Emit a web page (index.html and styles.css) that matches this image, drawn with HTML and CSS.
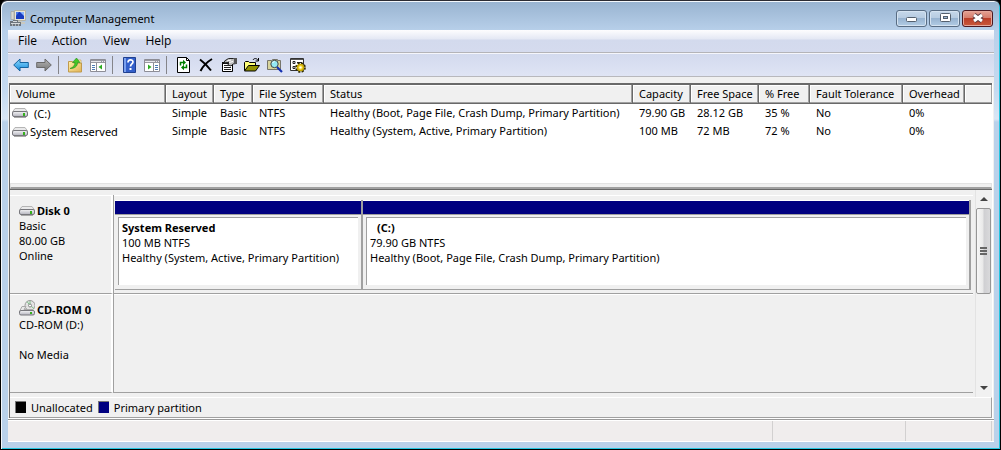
FILE: index.html
```html
<!DOCTYPE html>
<html lang="en">
<head>
<meta charset="utf-8">
<title>Computer Management</title>
<link rel="stylesheet" href="styles.css">
</head>
<body>
<svg class="defs" width="0" height="0" aria-hidden="true">
  <defs>
    <linearGradient id="metal" x1="0" y1="0" x2="0" y2="1"><stop offset="0" stop-color="#f4f4f6"/><stop offset="1" stop-color="#b4b4be"/></linearGradient>
    <linearGradient id="blue" x1="0" y1="0" x2="0" y2="1"><stop offset="0" stop-color="#8fdcff"/><stop offset="1" stop-color="#1388da"/></linearGradient>
    <linearGradient id="gray" x1="0" y1="0" x2="0" y2="1"><stop offset="0" stop-color="#b4b4b4"/><stop offset="1" stop-color="#777"/></linearGradient>
    <linearGradient id="folder" x1="0" y1="0" x2="1" y2="1"><stop offset="0" stop-color="#fff0a8"/><stop offset="1" stop-color="#e2b355"/></linearGradient>
    <symbol id="drive" viewBox="0 0 16 10">
      <path d="M3 .5h10l2.500 3.500H.5z" fill="#e9e9ea" stroke="#b5b5b5"/>
      <rect x=".5" y="3.500" width="15" height="5" rx="1.500" fill="url(#metal)" stroke="#77777c"/>
      <path d="M2 9.500h12" stroke="#a8a8a8"/>
      <rect x="11" y="5" width="2" height="3" fill="#35b01c"/>
    </symbol>
  </defs>
</svg>
<div class="window">
  <header class="titlebar">
    <svg class="icon" viewBox="0 0 16 16" aria-hidden="true">
      <path d="M4.500.5h11v10h-11z" fill="#e8e6d8" stroke="#b5b3a4"/><path d="M6 2h8v7H6z" fill="#183cc0"/><path d="M10 2h4v4z" fill="#8bb6ff"/><path d="M6 2h3L6 6z" fill="#4b79e6"/>
      <path d="M8 11h4v1h3v2H9z" fill="#c9c9c0"/><path d="M1 1.500h3v8H1z" fill="#d8d8d2" stroke="#9a9a94" stroke-width=".6"/><path d="M0 11h3v-1h5v2h3v4H0z" fill="#6d757d"/><path d="M3 11.500h4M1 13.500h9" stroke="#d5dade"/><path d="M2 15h1M5 15h1M8 15h1" stroke="#eee"/>
    </svg>
    <h1>Computer Management</h1>
    <div class="controls">
      <button class="control" aria-label="Minimize"><svg viewBox="0 0 16 12"><rect x="2.500" y="5.500" width="10" height="4" rx="1" fill="#fff" stroke="#54606e"/></svg></button>
      <button class="control" aria-label="Maximize"><svg viewBox="0 0 16 12"><rect x="3.500" y="1.500" width="10" height="8" rx="1" fill="#fff" stroke="#54606e"/><rect x="6.500" y="4.500" width="4" height="2" fill="#9db8d6" stroke="#54606e"/></svg></button>
      <button class="control close" aria-label="Close"><svg viewBox="0 0 16 12"><path d="M4 3l8 6M12 3l-8 6" stroke="#5c3b40" stroke-width="5"/><path d="M4 3l8 6M12 3l-8 6" stroke="#fff" stroke-width="3"/></svg></button>
    </div>
  </header>
  <div class="client">
    <nav class="menubar"><button>File</button><button>Action</button><button>View</button><button>Help</button></nav>
    <div class="toolbar" role="toolbar">
      <button aria-label="Back"><svg class="icon" viewBox="0 0 16 16"><path d="M.7 8L7 2v3.500h8.300v5H7V14z" fill="url(#blue)" stroke="#17649f"/></svg></button>
      <button aria-label="Forward"><svg class="icon" viewBox="0 0 16 16"><path d="M15.300 8L9 2v3.500H.7v5H9V14z" fill="url(#gray)" stroke="#6a6a6a"/></svg></button>
      <span class="sep"></span>
      <button aria-label="Up one level"><svg class="icon" viewBox="0 0 16 16"><path d="M1.500 4.500h4l1 1.500h8v9h-13z" fill="url(#folder)" stroke="#c09a4c"/><path d="M9 3h5v3h-4z" fill="#fff4bd" stroke="#c09a4c" stroke-width=".6"/><path d="M3 11.500c3-1 5-3 5-6H5.500L9.500 1 13 5.500h-2.500c0 4-3 6-7.500 6z" fill="#46c827" stroke="#228c18" stroke-width=".6"/></svg></button>
      <button aria-label="Show console tree"><svg class="icon" viewBox="0 0 16 16"><path d="M.5 2.500h15v12H.5z" fill="#fff" stroke="#8d8d96"/><path d="M1 3h14v3H1z" fill="#9999a2"/><path d="M1 4.500h10M12 4.500h1M14 4.500h1" stroke="#e7e7ec"/><path d="M6.500 6v8" stroke="#8d8d96"/><path d="M2 8.500h3M2 10.500h3M2 12.500h3" stroke="#4c7bb5"/><path d="M12 7.500v5L8.500 10z" fill="#2dac22"/></svg></button>
      <span class="sep"></span>
      <button aria-label="Help"><svg class="icon" viewBox="0 0 16 16"><path d="M2.500.5h12v15h-12z" fill="#335fca" stroke="#20408f"/><path d="M3 1h2v14H3z" fill="#7aa0ee"/><path d="M7 5.500c0-3.500 5-3.500 5-.5 0 2-2.500 2-2.500 4.500" fill="none" stroke="#fff" stroke-width="1.700"/><path d="M8.500 11h2v2h-2z" fill="#fff"/></svg></button>
      <button aria-label="Show action pane"><svg class="icon" viewBox="0 0 16 16"><path d="M.5 2.500h15v12H.5z" fill="#fff" stroke="#8d8d96"/><path d="M1 3h14v3H1z" fill="#9999a2"/><path d="M1 4.500h10M12 4.500h1M14 4.500h1" stroke="#e7e7ec"/><path d="M9.500 6v8" stroke="#8d8d96"/><path d="M11 8.500h3M11 10.500h3M11 12.500h3" stroke="#4c7bb5"/><path d="M4 7.500v5L7.500 10z" fill="#2dac22"/></svg></button>
      <span class="sep"></span>
      <button aria-label="Refresh"><svg class="icon" viewBox="0 0 16 16"><path d="M2.500.5h9l3 3v12h-12z" fill="#fff" stroke="#000"/><path d="M11.500.5v3h3" fill="none" stroke="#000"/><path d="M5.500 8.500v-3h3M11.500 7.500v3h-3" fill="none" stroke="#008000" stroke-width="1.500"/><path d="M8 2.700v5.600l3-2.800zM9 7.700v5.600l-3-2.800z" fill="#008000"/></svg></button>
      <button aria-label="Delete"><svg class="icon" viewBox="0 0 16 16"><path d="M2 2.500c4 3 8 7 11 11M14 2C9 5 5 9 2.500 14" fill="none" stroke="#000" stroke-width="2"/></svg></button>
      <button aria-label="Properties"><svg class="icon" viewBox="0 0 16 16"><path d="M1.500 5.500h10v9h-10z" fill="#fff" stroke="#000"/><path d="M1 5h8v2H1z" fill="#111"/><path d="M3 8.500h7M3 10.500h7M3 12.500h7" stroke="#222"/><path d="M3.500 4l4-2.500h5l2.500 1v4l-3 .5-2 2-3-1 1-3-4 1z" fill="#bbb" stroke="#222"/><path d="M6 4l4-1M8 5.500l4-1" stroke="#fff"/><path d="M13 1h3v6h-3z" fill="#555"/></svg></button>
      <button aria-label="Open"><svg class="icon" viewBox="0 0 16 16"><path d="M.5 13.500v-8l1-1h3l1 1h6v3" fill="#ffff78" stroke="#000"/><path d="M.5 14l4-5.500h11L11.500 14z" fill="#949400" stroke="#000"/><path d="M9 3c1-2 4-2 5 .5M14.500 1v3h-3" fill="none" stroke="#000"/></svg></button>
      <button aria-label="Search"><svg class="icon" viewBox="0 0 16 16"><path d="M.5 3.500h4l1-1h5v1h3v9H.5z" fill="#d8d49c" stroke="#77756a"/><circle cx="7.500" cy="7" r="3.700" fill="#93e8f4" stroke="#444"/><path d="M5.500 6l2-2" stroke="#fff"/><path d="M10 10l5 5" stroke="#1430b0" stroke-width="2.200"/></svg></button>
      <button aria-label="Settings"><svg class="icon" viewBox="0 0 16 16"><path d="M.5 1.500h13v12H.5z" fill="#fff" stroke="#333"/><path d="M1 2.500h12" stroke="#555"/><path d="M3 4.500h2v2H3zM3 9.500h2v2H3z" fill="#fff" stroke="#222"/><path d="M7 5.500h5M7 8.500h2" stroke="#222"/><circle cx="10.500" cy="10.500" r="4.200" fill="none" stroke="#312b00" stroke-width="2.300" stroke-dasharray="2 1.300"/><circle cx="10.500" cy="10.500" r="3" fill="#ffe34a" stroke="#c9a900" stroke-width="1.500"/><circle cx="10.500" cy="10.500" r="1.100" fill="#fff"/></svg></button>
    </div>
    <main class="panes">
      <section class="volumes">
        <table>
          <colgroup><col class="w-volume"><col class="w-layout"><col class="w-type"><col class="w-fs"><col class="w-status"><col class="w-capacity"><col class="w-space"><col class="w-free"><col class="w-fault"><col class="w-overhead"><col></colgroup>
          <thead><tr><th>Volume</th><th>Layout</th><th>Type</th><th>File System</th><th>Status</th><th>Capacity</th><th>Free Space</th><th>% Free</th><th>Fault Tolerance</th><th>Overhead</th><th></th></tr></thead>
          <tbody>
            <tr><td class="name"><svg class="drive"><use href="#drive"/></svg><span class="letter">(C:)</span></td><td>Simple</td><td>Basic</td><td>NTFS</td><td>Healthy (Boot, Page File, Crash Dump, Primary Partition)</td><td>79.90 GB</td><td>28.12 GB</td><td>35 %</td><td>No</td><td>0%</td><td></td></tr>
            <tr><td class="name"><svg class="drive"><use href="#drive"/></svg><span>System Reserved</span></td><td>Simple</td><td>Basic</td><td>NTFS</td><td>Healthy (System, Active, Primary Partition)</td><td>100 MB</td><td>72 MB</td><td>72 %</td><td>No</td><td>0%</td><td></td></tr>
          </tbody>
        </table>
        <div class="splitter"></div>
      </section>
      <section class="disks">
        <div class="disk-list">
          <article class="disk">
            <div class="disk-info"><h2><svg class="drive"><use href="#drive"/></svg>Disk 0</h2><p>Basic</p><p>80.00 GB</p><p>Online</p></div>
            <div class="partitions">
              <div class="partition system"><div class="band"></div><div class="box"><div class="label"><h3>System Reserved</h3><p>100 MB NTFS</p><p>Healthy (System, Active, Primary Partition)</p></div></div></div>
              <div class="partition"><div class="band"></div><div class="box"><div class="label"><h3 class="letter">(C:)</h3><p>79.90 GB NTFS</p><p>Healthy (Boot, Page File, Crash Dump, Primary Partition)</p></div></div></div>
            </div>
          </article>
          <article class="disk">
            <div class="disk-info"><h2><svg class="cdrom" viewBox="0 0 16 16"><circle cx="11" cy="5.500" r="5" fill="#e4e4e4" stroke="#999"/><path d="M11 5.500L8 1.500M11 5.500l4 3M11 5.500V1" stroke="#7ec48a"/><circle cx="11" cy="5.500" r="1.500" fill="#fff" stroke="#888"/><path d="M3 6.500h4L5 9.500h8l2.500 2H.5z" fill="#e9e9ea" stroke="#aaa"/><rect x=".5" y="10.500" width="15" height="4.500" rx="1.500" fill="url(#metal)" stroke="#77777c"/><rect x="11" y="12" width="2" height="2" fill="#35b01c"/></svg>CD-ROM 0</h2><p>CD-ROM (D:)</p><p>&nbsp;</p><p>No Media</p></div>
            <div class="partitions empty"></div>
          </article>
        </div>
        <div class="scrollbar">
          <button aria-label="Scroll up"><svg viewBox="0 0 8 4"><path d="M0 4l4-4 4 4z"/></svg></button>
          <div class="track"><div class="thumb"><i></i><i></i><i></i></div></div>
          <button aria-label="Scroll down"><svg viewBox="0 0 8 4"><path d="M0 0l4 4 4-4z"/></svg></button>
        </div>
      </section>
      <div class="legend"><span class="swatch unallocated"></span><span>Unallocated</span><span class="swatch primary"></span><span>Primary partition</span></div>
    </main>
    <footer class="status"><span></span><span></span><span></span></footer>
  </div>
</div>
</body>
</html>
```

FILE: styles.css
```css
* { box-sizing: border-box; }
body { margin: 0; background: #000; color: #000; font: 11px/15px "Noto Sans", "Open Sans", sans-serif; }
h1, h2, h3, p { margin: 0; font-size: inherit; font-weight: inherit; }
button { margin: 0; padding: 0; border: 0; background: none; color: inherit; font: inherit; }
svg { display: block; flex: none; }
.defs { position: absolute; }
.icon { width: 16px; height: 16px; }

.window {
  display: flex; flex-direction: column; height: 100vh;
  padding: 0 5px 7px 7px;
  border: 1px solid #000; border-top-color: #2b2b33;
  border-radius: 7px 7px 0 0;
  background: linear-gradient(#98b3d0, #b8d0ea 30px, #c5daf0 90px, #d8e6f5 118px, #b9d1ea 121px);
  box-shadow: inset 1px 1px 0 #f4f8fc, inset -1px -1px 0 #24c5e0;
}
.titlebar { display: flex; align-items: center; height: 29px; padding: 5px 2px 0 2px; gap: 4px; }
.titlebar h1 { flex: 1; }
.controls { display: flex; gap: 2px; }
.control {
  display: grid; place-items: center; width: 31px; height: 17px;
  border: 1px solid #586c83; border-radius: 3px;
  background: linear-gradient(#c6d8ea, #b6cbe1 48%, #97b3d0 50%, #b2cce5);
  box-shadow: inset 0 0 0 1px #d5e3f1;
}
.control svg { width: 16px; height: 12px; }
.close { border-color: #4c1820; background: linear-gradient(#e5a294, #d57b6b 48%, #bb3e29 50%, #c9593a); box-shadow: inset 0 0 0 1px #e5a79b; }

.client { flex: 1; min-height: 0; display: flex; flex-direction: column; margin-right: 1px; padding: 0 1px; background: #f0f0f0; }
.menubar { display: flex; flex: none; height: 23px; margin: 0 -1px; padding: 0 0 1px 2px; border-bottom: 1px solid #b4b4b8; background: linear-gradient(#fdfdfe, #e4e8f4 9px, #d3daed 10px, #d5dbee); font: 12px/15px "Open Sans", "Noto Sans", sans-serif; }
.menubar button { padding: 0 8px; }
.menubar button:first-child { padding-right: 7px; }
.toolbar { display: flex; flex: none; align-items: center; height: 24px; margin: 0 -1px; padding-left: 1px; border-top: 1px solid #f5f6fb; border-bottom: 1px solid #b8b8bc; background: linear-gradient(#d3daee, #dfe4f4); }
.toolbar button { display: grid; place-items: center; width: 23px; height: 22px; }
.sep { width: 8px; height: 18px; border-left: 1px solid #85858a; margin: 0 -3px 0 3px; }

.panes { flex: 1; min-height: 0; display: flex; flex-direction: column; margin-top: 6px; border-left: 1px solid #696969; border-right: 1px solid #fff; }
.volumes { display: flex; flex-direction: column; flex: none; height: 107px; border-top: 2px solid #696969; border-bottom: 1px solid #696969; background: #fff; }
.volumes table { width: 100%; table-layout: fixed; border-collapse: separate; border-spacing: 0; }
th, td { padding: 0 0 2px 6px; overflow: visible; text-align: left; font-weight: 400; white-space: nowrap; }
th { height: 19px; background: #f0f0f0; border-right: 1px solid #696969; border-bottom: 1px solid #696969; box-shadow: inset -1px -1px 0 #a0a0a0, inset 1px 1px 0 #fff; }
th:last-child { border-right: 0; }
td { height: 17px; }
.w-volume { width: 156px; } .w-layout { width: 48px; } .w-type { width: 39px; } .w-fs { width: 71px; } .w-status { width: 309px; }
.w-capacity { width: 58px; } .w-space { width: 68px; } .w-free { width: 51px; } .w-fault { width: 93px; } .w-overhead { width: 62px; }
.name { padding-left: 2px; }
.name svg, .name span { display: inline-block; vertical-align: middle; margin-right: 2px; }
.letter { padding-left: 4px; }
.drive { width: 16px; height: 10px; }
.splitter { height: 6px; margin-top: auto; border: 1px solid #e3e3e3; border-bottom: 2px solid #a0a0a0; background: #f0f0f0; }

.disks { flex: 1; min-height: 0; display: flex; }
.disk-list { flex: 1; min-width: 0; padding-top: 5px; }
.disk { display: flex; height: 99px; }
.disk-info { width: 103px; padding: 7px 0 0 9px; border-top: 1px solid #fff; border-right: 2px solid #fff; border-bottom: 1px solid #a0a0a0; }
.disk-info h2 { display: flex; align-items: center; gap: 2px; font-weight: 700; }
.cdrom { width: 16px; height: 16px; margin-top: -4px; }
.partitions { flex: 1; min-width: 0; display: flex; padding: 5px 2px 3px 1px; border: solid #a0a0a0; border-width: 0 0 1px 1px; box-shadow: inset 0 1px 0 #fff; }
.partition { flex: 1; min-width: 0; display: flex; flex-direction: column; border-right: 2px solid #a0a0a0; border-bottom: 1px solid #a0a0a0; }
.system { flex: 0 0 248px; }
.band { flex: none; height: 15px; border: solid #a0a0a0; border-width: 1px 0; border-top-color: #fff; background: #000080; }
.box { flex: 1; min-height: 0; padding: 2px 3px; }
.label { height: 68px; padding: 2px 3px; border: solid #a0a0a0; border-width: 1px 0 0 1px; background: #fff; white-space: nowrap; }
.label h3 { font-weight: 700; }
.label .letter { padding-left: 7px; }
.scrollbar { display: flex; flex-direction: column; flex: none; width: 17px; margin-left: 2px; border-left: 1px solid #e3e3e3; background: #f1f1f1; }
.scrollbar button { display: grid; place-items: center; height: 18px; }
.scrollbar button svg { width: 8px; height: 4px; fill: #444; }
.track { flex: 1; }
.thumb { display: flex; flex-direction: column; align-items: center; justify-content: center; gap: 1px; width: 15px; height: 86px; border: 1px solid #969696; border-radius: 2px; background: linear-gradient(90deg, #f7f7f7, #e8e8e8 48%, #cfcfd2 52%, #d9d9db); }
.thumb i { width: 7px; height: 2px; background: #666; }
.legend { display: flex; flex: none; align-items: center; height: 21px; padding: 0 0 1px 5px; gap: 5px; border: solid #a0a0a0; border-width: 1px 1px 1px 0; border-top-color: #fff; }
.swatch { width: 11px; height: 12px; border: 1px solid #777; border-width: 1px 0 0 1px; }
.unallocated { background: #000; }
.primary { background: #000080; }
.status { display: flex; flex: none; height: 24px; margin: 0 -1px; padding-right: 2px; border-top: 1px solid #fff; border-bottom: 1px solid #fff; background: #f0eded; box-shadow: inset 0 1px 0 #999, inset 0 2px 0 #fff; }
.status span { flex: none; width: 133px; margin-top: 2px; border-right: 1px solid #d2d0d0; }
.status span:first-child { flex: 1; }
.status span:last-child { width: 86px; }
```
